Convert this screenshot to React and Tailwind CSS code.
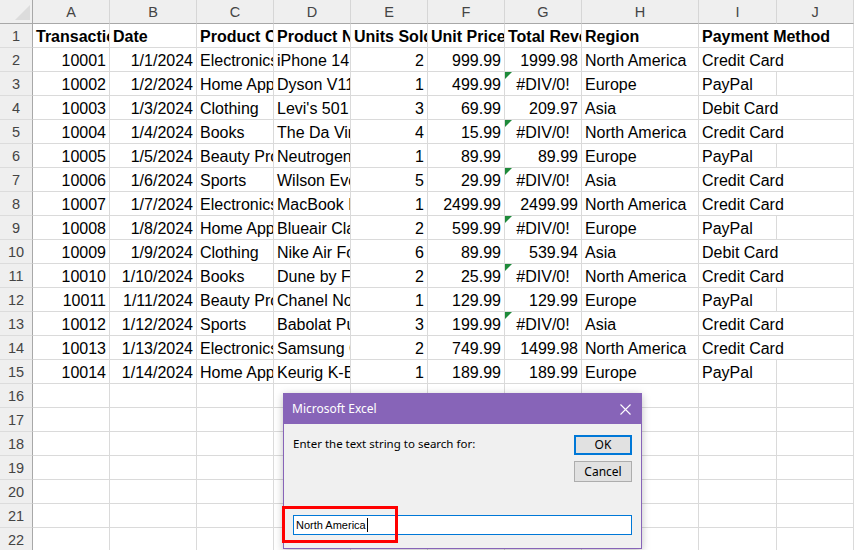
import React from 'react';

const colWidths = 'grid-cols-[33px_77px_87px_77px_77px_77px_77px_77px_117px_78px_77px]';
const letters = ['A', 'B', 'C', 'D', 'E', 'F', 'G', 'H', 'I', 'J'];

const header = ['Transaction ID', 'Date', 'Product Category', 'Product Name', 'Units Sold', 'Unit Price', 'Total Revenue', 'Region', 'Payment Method'];

const rows = [
    [10001, '1/1/2024', 'Electronics', 'iPhone 14 Pro', 2, '999.99', '1999.98', 'North America', 'Credit Card'],
    [10002, '1/2/2024', 'Home Appliances', 'Dyson V11 Vacuum', 1, '499.99', '#DIV/0!', 'Europe', 'PayPal'],
    [10003, '1/3/2024', 'Clothing', "Levi's 501 Jeans", 3, '69.99', '209.97', 'Asia', 'Debit Card'],
    [10004, '1/4/2024', 'Books', 'The Da Vinci Code', 4, '15.99', '#DIV/0!', 'North America', 'Credit Card'],
    [10005, '1/5/2024', 'Beauty Products', 'Neutrogena Hydro Boost', 1, '89.99', '89.99', 'Europe', 'PayPal'],
    [10006, '1/6/2024', 'Sports', 'Wilson Evolution Basketball', 5, '29.99', '#DIV/0!', 'Asia', 'Credit Card'],
    [10007, '1/7/2024', 'Electronics', 'MacBook Pro 16-inch', 1, '2499.99', '2499.99', 'North America', 'Credit Card'],
    [10008, '1/8/2024', 'Home Appliances', 'Blueair Classic 480i', 2, '599.99', '#DIV/0!', 'Europe', 'PayPal'],
    [10009, '1/9/2024', 'Clothing', 'Nike Air Force 1', 6, '89.99', '539.94', 'Asia', 'Debit Card'],
    [10010, '1/10/2024', 'Books', 'Dune by Frank Herbert', 2, '25.99', '#DIV/0!', 'North America', 'Credit Card'],
    [10011, '1/11/2024', 'Beauty Products', 'Chanel No. 5 Perfume', 1, '129.99', '129.99', 'Europe', 'PayPal'],
    [10012, '1/12/2024', 'Sports', 'Babolat Pure Drive', 3, '199.99', '#DIV/0!', 'Asia', 'Credit Card'],
    [10013, '1/13/2024', 'Electronics', 'Samsung Galaxy Tab S8', 2, '749.99', '1499.98', 'North America', 'Credit Card'],
    [10014, '1/14/2024', 'Home Appliances', 'Keurig K-Elite Coffee Maker', 1, '189.99', '189.99', 'Europe', 'PayPal'],
];

// columns A, B, E, F, G hold numbers and sit right
const rightCols = [0, 1, 4, 5, 6];

const Cell = ({ children, align = 'left', bold, span, error }) => (
    <div
        className={`relative h-6 flex items-end pb-[1px] px-[3px] overflow-hidden whitespace-nowrap border-r border-b border-[#dadada] text-black ${
            align === 'right' ? 'justify-end' : align === 'center' ? 'justify-center' : 'justify-start'
        } ${bold ? 'font-bold' : ''} ${span ? 'col-span-2' : ''}`}
    >
        {error && (
            <svg className="absolute top-0 left-0" width="7" height="7" viewBox="0 0 7 7">
                <polygon points="0,0 7,0 0,7" fill="#1e8a3a" />
            </svg>
        )}
        <span className="leading-[18px]">{children}</span>
    </div>
);

const RowHead = ({ n }) => (
    <div className="h-6 flex items-end justify-center pb-[2px] bg-[#efefef] border-r border-r-[#a8a8a8] border-b border-b-[#dcdcdc] text-[14.5px] leading-[17px] text-[#444]">
        {n}
    </div>
);

const Sheet = () => (
    <div className={`grid ${colWidths} font-['Liberation_Sans',Arial,sans-serif] text-[16px]`}>
        {/* corner */}
        <div className="h-6 flex items-end justify-end bg-[#efefef] border-r border-r-[#a8a8a8] border-b border-b-[#a8a8a8] pr-[2px] pb-[3px]">
            <svg width="15" height="15" viewBox="0 0 15 15">
                <polygon points="0,15 15,15 15,0" fill="#dcdcdc" />
            </svg>
        </div>
        {letters.map((l) => (
            <div
                key={l}
                className="h-6 flex items-end justify-center pb-[2px] bg-[#efefef] border-r border-r-[#d6d6d6] border-b border-b-[#a8a8a8] text-[14.5px] leading-[17px] text-[#444]"
            >
                {l}
            </div>
        ))}

        <RowHead n={1} />
        {header.map((h, i) => (
            <Cell key={h} bold span={i === 8}>
                {h}
            </Cell>
        ))}

        {rows.map((r, ri) => (
            <React.Fragment key={r[0]}>
                <RowHead n={ri + 2} />
                {r.map((v, ci) => {
                    const err = v === '#DIV/0!';
                    const wide = ci === 8 && v !== 'PayPal';
                    return (
                        <Cell
                            key={ci}
                            align={err ? 'center' : rightCols.includes(ci) ? 'right' : 'left'}
                            error={err}
                            span={wide}
                        >
                            {v}
                        </Cell>
                    );
                })}
                {r[8] === 'PayPal' && <Cell />}
            </React.Fragment>
        ))}

        {[16, 17, 18, 19, 20, 21, 22].map((n) => (
            <React.Fragment key={n}>
                <RowHead n={n} />
                {letters.map((l) => (
                    <Cell key={l} />
                ))}
            </React.Fragment>
        ))}
    </div>
);

const InputBox = () => (
    <div className="absolute left-[283px] top-[393px] w-[359px] h-[156px] flex flex-col border border-[#8764b8] bg-[#f0f0f0] shadow-[0_2px_8px_rgba(0,0,0,0.25)] font-['Noto_Sans','Liberation_Sans',sans-serif]">
        <div className="h-[30px] shrink-0 flex items-center justify-between bg-[#8764b8] pl-[8px] pr-[10px]">
            <span className="text-[12px] text-white">Microsoft Excel</span>
            <svg width="11" height="11" viewBox="0 0 11 11">
                <path d="M0.5 0.5 L10.5 10.5 M10.5 0.5 L0.5 10.5" stroke="#fff" strokeWidth="1.1" fill="none" />
            </svg>
        </div>
        <div className="flex-1 flex flex-col pl-[9px] pr-[9px] pb-[13px]">
            <div className="flex justify-between pt-[11px]">
                <span className="text-[11.5px] leading-[16px] text-black pt-[1px]">Enter the text string to search for:</span>
                <div className="flex flex-col gap-[6px]">
                    <button className="w-[58px] h-[20px] flex items-center justify-center bg-[#e1e1e1] border-2 border-[#0078d7] text-[12px] text-black">
                        OK
                    </button>
                    <button className="w-[58px] h-[21px] flex items-center justify-center bg-[#e1e1e1] border border-[#adadad] text-[12px] text-black">
                        Cancel
                    </button>
                </div>
            </div>
            <div className="mt-auto h-[20px] flex items-center bg-white border border-[#0078d7] pl-[2px] font-['Liberation_Sans',Arial,sans-serif] text-[11px] text-black">
                North America
                <span className="ml-[1px] w-px h-[14px] bg-black" />
            </div>
        </div>
    </div>
);

const App = () => {
    return (
        <div className="relative w-[854px] h-[550px] overflow-hidden bg-white">
            <Sheet />
            <InputBox />
            <div className="absolute left-[282px] top-[506px] w-[116px] h-[37px] border-[3px] border-[#ff0000]" />
        </div>
    );
};

export default App;
